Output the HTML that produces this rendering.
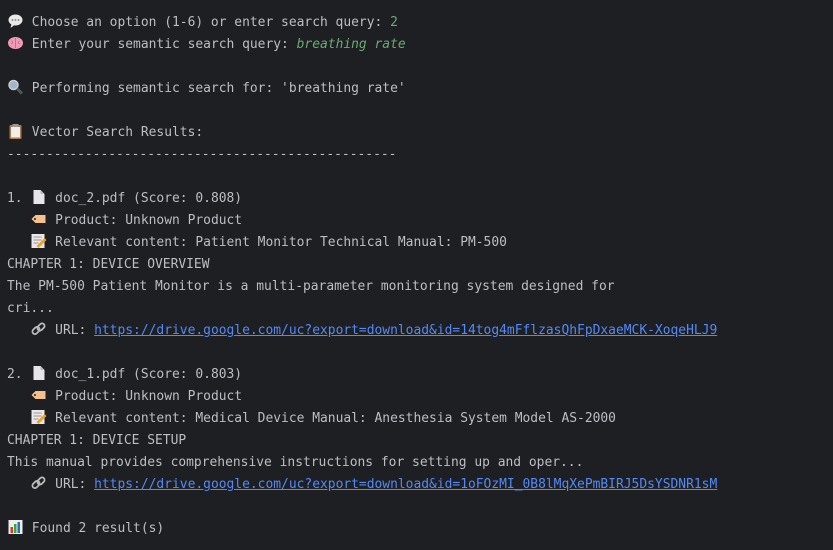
<!DOCTYPE html>
<html><head><meta charset="utf-8"><style>
html,body{margin:0;padding:0;background:#1e1f22;width:833px;height:550px;overflow:hidden}
pre{margin:0;padding:12px 0 0 7px;font-family:"DejaVu Sans Mono","Liberation Mono",monospace;font-size:12.95px;line-height:22px;color:#bcbec4;white-space:pre}
.g{color:#6aab73}.i{font-style:italic}
a{color:#548af7;text-decoration:underline}
.e{display:inline-block;width:17px;height:16px;vertical-align:-3px}
</style></head><body><pre><svg class="e" viewBox="0 0 16 16"><ellipse cx="8" cy="7" rx="7" ry="5.5" fill="#e8e8e8"/><path d="M4 11 L3 15 L7 12Z" fill="#e8e8e8"/><circle cx="5" cy="7" r=".9" fill="#777"/><circle cx="8" cy="7" r=".9" fill="#777"/><circle cx="11" cy="7" r=".9" fill="#777"/></svg> Choose an option (1-6) or enter search query: <span class="g">2</span>
<svg class="e" viewBox="0 0 16 16"><ellipse cx="8" cy="8" rx="7.5" ry="6" fill="#f09ab8"/><path d="M8 3v10M4 6q2 1 0 3M12 6q-2 1 0 3" stroke="#c96a8c" fill="none"/></svg> Enter your semantic search query: <span class="g i">breathing rate</span>

<svg class="e" viewBox="0 0 16 16"><circle cx="6" cy="6" r="4.5" fill="#9bb7c9" stroke="#ccc" stroke-width="1.5"/><path d="M9.5 9.5L14.5 14.5" stroke="#555" stroke-width="3"/></svg> Performing semantic search for: 'breathing rate'

<svg class="e" viewBox="0 0 16 16"><rect x="2" y="2" width="12" height="14" rx="1" fill="#b07a45"/><rect x="3.5" y="4" width="9" height="10.5" fill="#eee"/><rect x="5" y="1" width="6" height="3" fill="#999"/></svg> Vector Search Results:
--------------------------------------------------

1. <svg class="e" viewBox="0 0 16 16"><path d="M3 1h7l4 4v10H3z" fill="#e6e6e6"/><path d="M10 1v4h4" fill="#bbb"/></svg> doc_2.pdf (Score: 0.808)
   <svg class="e" viewBox="0 0 16 16"><path d="M1 8l4-4h10v8H5z" fill="#f5c08a"/><circle cx="4.5" cy="8" r="1" fill="#1e1f22"/></svg> Product: Unknown Product
   <svg class="e" viewBox="0 0 16 16"><rect x="1" y="1" width="13" height="14" fill="#e8e8e8"/><path d="M3 4h8M3 7h8M3 10h5" stroke="#999"/><path d="M6 13l8-8 2 2-8 8z" fill="#f0a030"/></svg> Relevant content: Patient Monitor Technical Manual: PM-500
CHAPTER 1: DEVICE OVERVIEW
The PM-500 Patient Monitor is a multi-parameter monitoring system designed for
cri...
   <svg class="e" viewBox="0 0 16 16"><g fill="none" stroke="#bbb" stroke-width="1.8"><rect x="1.5" y="7" width="8" height="5" rx="2.5" transform="rotate(-45 5.5 9.5)"/><rect x="6.5" y="3.5" width="8" height="5" rx="2.5" transform="rotate(-45 10.5 6)"/></g></svg> URL: <a>https://drive.google.com/uc?export=download&amp;id=14tog4mFflzasQhFpDxaeMCK-XoqeHLJ9</a>

2. <svg class="e" viewBox="0 0 16 16"><path d="M3 1h7l4 4v10H3z" fill="#e6e6e6"/><path d="M10 1v4h4" fill="#bbb"/></svg> doc_1.pdf (Score: 0.803)
   <svg class="e" viewBox="0 0 16 16"><path d="M1 8l4-4h10v8H5z" fill="#f5c08a"/><circle cx="4.5" cy="8" r="1" fill="#1e1f22"/></svg> Product: Unknown Product
   <svg class="e" viewBox="0 0 16 16"><rect x="1" y="1" width="13" height="14" fill="#e8e8e8"/><path d="M3 4h8M3 7h8M3 10h5" stroke="#999"/><path d="M6 13l8-8 2 2-8 8z" fill="#f0a030"/></svg> Relevant content: Medical Device Manual: Anesthesia System Model AS-2000
CHAPTER 1: DEVICE SETUP
This manual provides comprehensive instructions for setting up and oper...
   <svg class="e" viewBox="0 0 16 16"><g fill="none" stroke="#bbb" stroke-width="1.8"><rect x="1.5" y="7" width="8" height="5" rx="2.5" transform="rotate(-45 5.5 9.5)"/><rect x="6.5" y="3.5" width="8" height="5" rx="2.5" transform="rotate(-45 10.5 6)"/></g></svg> URL: <a>https://drive.google.com/uc?export=download&amp;id=1oFOzMI_0B8lMqXePmBIRJ5DsYSDNR1sM</a>

<svg class="e" viewBox="0 0 16 16"><rect x="1" y="1" width="14" height="14" fill="#eee"/><rect x="3" y="8" width="2.5" height="6" fill="#d33"/><rect x="6.5" y="5" width="2.5" height="9" fill="#3a3"/><rect x="10" y="3" width="2.5" height="11" fill="#36c"/></svg> Found 2 result(s)</pre></body></html>
